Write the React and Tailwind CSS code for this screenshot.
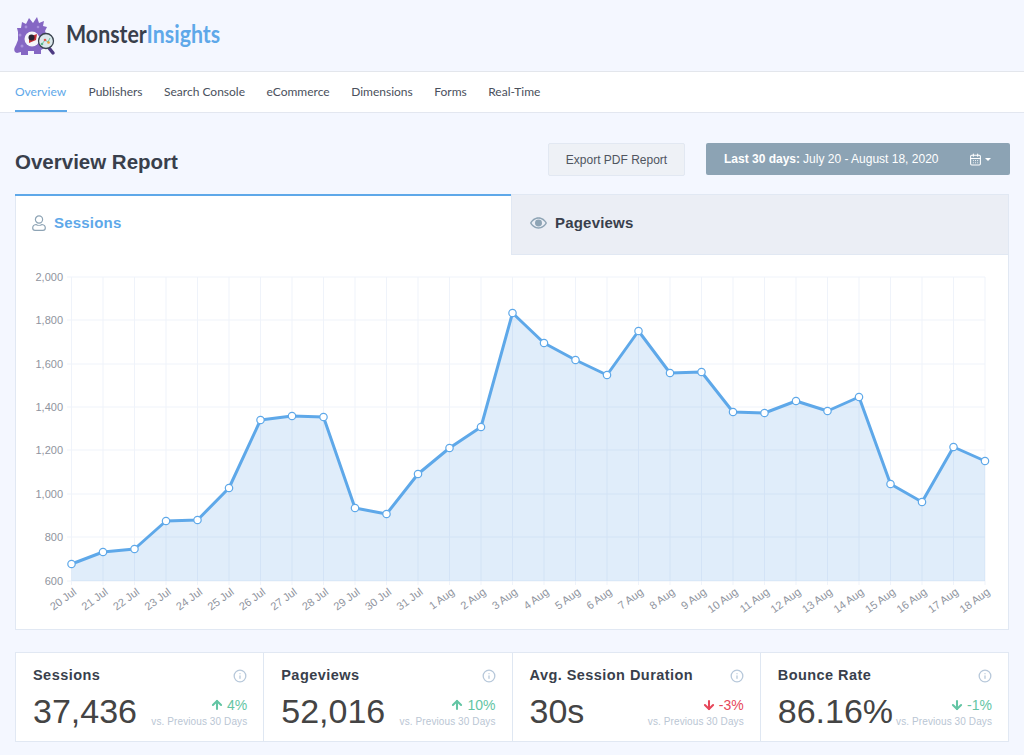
import React from "react";
import { ArrowUp, ArrowDown, Info, CalendarDays } from "lucide-react";

const sans = "font-['Liberation_Sans',Arial,sans-serif]";
const ys = [564, 552, 549, 521, 520, 488, 420, 416, 417, 508, 514, 474, 448, 427, 313, 343, 360, 375, 331, 373, 372, 412, 413, 401, 411, 397, 484, 502, 447, 461];
const labels = ["20 Jul","21 Jul","22 Jul","23 Jul","24 Jul","25 Jul","26 Jul","27 Jul","28 Jul","29 Jul","30 Jul","31 Jul","1 Aug","2 Aug","3 Aug","4 Aug","5 Aug","6 Aug","7 Aug","8 Aug","9 Aug","10 Aug","11 Aug","12 Aug","13 Aug","14 Aug","15 Aug","16 Aug","17 Aug","18 Aug"];
const yTicks = [["2,000",277],["1,800",320],["1,600",364],["1,400",407],["1,200",450],["1,000",494],["800",537],["600",581]];
const X = (i) => 71.5 + i * 31.5;

function Chart() {
  const line = ys.map((y, i) => `${X(i)},${y}`).join(" ");
  const area = `71.5,581 ${line} ${X(29)},581`;
  return (
    <svg viewBox="16 255 992 374" className="block w-[992px] h-[374px]">
      {yTicks.map(([t, y]) => (
        <g key={t}>
          <line x1="67" x2={X(29)} y1={y} y2={y} stroke="#eff3fa" strokeWidth="1" />
          <text x="63" y={y + 4} textAnchor="end" fontSize="11" fill="#8f949e" fontFamily="Liberation Sans">{t}</text>
        </g>
      ))}
      {labels.map((l, i) => (
        <g key={l}>
          <line x1={X(i)} x2={X(i)} y1="277" y2="585" stroke="#eff3fa" strokeWidth="1" />
          <text transform={`translate(${X(i) + 1} 587) rotate(-36)`} textAnchor="end" dominantBaseline="hanging" fontSize="11" fill="#8f949e" fontFamily="Liberation Sans">{l}</text>
        </g>
      ))}
      <polygon points={area} fill="#5a9fe6" fillOpacity="0.19" />
      <polyline points={line} fill="none" stroke="#5ea8e9" strokeWidth="3" strokeLinejoin="round" />
      {ys.map((y, i) => (
        <circle key={i} cx={X(i)} cy={y} r="3.7" fill="#fff" stroke="#5ea8e9" strokeWidth="1.2" />
      ))}
    </svg>
  );
}

function Logo() {
  return (
    <svg viewBox="0 0 42 40" className="w-[42px] h-[40px] shrink-0">
      <path fill="#8567c4" d="M3 37 C-1 36 0 32 2 29 L4 24 L4 16 L3 12 L7 12 L8 6 L12 8 L15 2 L19 7 L23 1 L25 7 L30 5 L29 10 L33 11 L31 15 L33 20 L34 30 L27 34 L27 38 L20 38 L20 35 L14 35 L14 39 L7 39 L7 36 Z" />
      <circle cx="6" cy="19" r="1.5" fill="#a890db" />
      <circle cx="12" cy="11" r="1.4" fill="#a890db" />
      <circle cx="24" cy="11" r="1.300" fill="#a890db" />
      <circle cx="8" cy="30" r="1.500" fill="#a890db" />
      <circle cx="18" cy="23" r="7.500" fill="#f6f6fa" />
      <path d="M15 21 L23 18 L22 24 L15 27 Z" fill="#c62f37" />
      <circle cx="17.500" cy="21.500" r="3" fill="#2a2433" />
      <path d="M35 32 L39 37" stroke="#4d3a82" strokeWidth="3.500" strokeLinecap="round" />
      <circle cx="32" cy="25" r="7.500" fill="#dbe8ec" stroke="#39424e" strokeWidth="1.300" />
      <path d="M28 28 L31 24 L34 26 L36 22" fill="none" stroke="#6fc3a5" strokeWidth="1" />
      <circle cx="28" cy="28" r="1.300" fill="#5fb88f" />
      <circle cx="31" cy="24" r="1.300" fill="#e2574c" />
      <circle cx="34.500" cy="26.500" r="1.300" fill="#e9a23b" />
    </svg>
  );
}

function Eye() {
  return (
    <svg viewBox="0 0 18 12" className="w-[17px] h-[12px] shrink-0">
      <path fill="#8ea4b5" d="M9 0C5 0 1.800 2.500 0 6c1.800 3.500 5 6 9 6s7.200-2.500 9-6c-1.800-3.500-5-6-9-6zm0 10.500C6 10.500 3.300 8.800 1.600 6 3.300 3.200 6 1.500 9 1.500s5.700 1.700 7.400 4.500C14.700 8.800 12 10.500 9 10.500z" />
      <circle cx="9" cy="6" r="3.700" fill="#8ea4b5" />
    </svg>
  );
}

function Person() {
  return (
    <svg viewBox="0 0 14 16" className="w-[14px] h-[16px] shrink-0" fill="none" stroke="#8ea4b5" strokeWidth="1.200">
      <circle cx="7" cy="4.500" r="3.600" />
      <path d="M4 9.500 C2 9.800 0.700 11 0.700 13 C0.700 14.500 1.700 15.300 3 15.300 L11 15.300 C12.300 15.300 13.300 14.500 13.300 13 C13.300 11 12 9.800 10 9.500 C8.500 10.500 5.500 10.500 4 9.500 Z" />
    </svg>
  );
}

function Stat({ title, value, delta, dir, good, last }) {
  const color = good ? "text-[#63c5a4]" : "text-[#e6475a]";
  const Arrow = dir === "up" ? ArrowUp : ArrowDown;
  return (
    <div className={`flex-1 min-w-0 h-full pl-[17px] pr-[16px] pt-[15px] ${last ? "" : "border-r border-[#dfe7f2]"}`}>
      <div className="flex items-center justify-between h-[16px]">
        <span className="text-[14.5px] font-bold text-[#393f4c] tracking-[0.45px] whitespace-nowrap">{title}</span>
        <Info className="w-[14px] h-[14px] text-[#b7c8da]" strokeWidth={2.2} />
      </div>
      <div className="flex items-end justify-between mt-[5px]">
        <span className="text-[34px] leading-[44px] text-[#444444] whitespace-nowrap">{value}</span>
        <div className="flex flex-col items-end mb-[4px]">
          <span className={`flex items-center gap-[3px] text-[14px] leading-[18px] ${color}`}>
            <Arrow className="w-[14px] h-[14px]" strokeWidth={3.5} />
            {delta}
          </span>
          <span className="text-[10px] leading-[15px] text-[#bac6d4] whitespace-nowrap tracking-[0.1px]">vs. Previous 30 Days</span>
        </div>
      </div>
    </div>
  );
}

export default function App() {
  const nav = ["Publishers", "Search Console", "eCommerce", "Dimensions", "Forms", "Real-Time"];
  return (
    <div className={`h-[755px] overflow-hidden bg-[#f4f7ff] ${sans}`}>
      <header className="h-[72px] border-b border-[#e3e6ec] flex items-center pl-[14px] gap-[10px]">
        <Logo />
        <span className="font-['Lato',sans-serif] font-bold text-[24px] leading-none mt-[-4px] origin-left scale-x-[0.89] whitespace-nowrap">
          <span className="text-[#393f4c]">Monster</span><span className="text-[#5ea8e9]">Insights</span>
        </span>
      </header>
      <nav className="h-[41px] bg-white border-b border-[#e3e7f0] flex pl-[15px] gap-[21.5px] font-['Lato',sans-serif] text-[12px] text-[#4a505c]">
        <span className="h-full flex items-center text-[#5ea8e9] border-b-2 border-[#5ea8e9] pt-[1px] w-[52px]">Overview</span>
        {nav.map((n) => (
          <span key={n} className="h-full flex items-center pb-[1px]">{n}</span>
        ))}
      </nav>
      <main className="px-[15px]">
        <div className="flex items-start justify-between h-[81px]">
          <h1 className="text-[20.5px] leading-[28px] pt-[35px] font-bold text-[#393f4c]">Overview Report</h1>
          <div className="flex items-start gap-[21px] pt-[30px] -mr-px">
            <button className="w-[137px] h-[33px] bg-[#eef1f6] border border-[#e2e8f2] rounded-[2px] text-[12px] text-[#4f5560]">Export PDF Report</button>
            <button className="w-[304px] h-[32px] bg-[#8ca3b4] rounded-[2px] text-[12px] text-white flex items-center pl-[18px] pr-[19px]">
              <span className="font-bold">Last 30 days:</span>
              <span className="ml-[3px]">July 20 - August 18, 2020</span>
              <CalendarDays className="w-[13px] h-[13px] ml-auto" strokeWidth={2} />
              <span className="ml-[3px] w-0 h-0 border-x-[3px] border-x-transparent border-t-[3px] border-t-white" />
            </button>
          </div>
        </div>
        <section className="w-[994px] bg-white border border-[#e1e8f3]">
          <div className="flex h-[60px]">
            <div className="w-[496px] -mt-px -ml-px border-t-2 border-[#5ea8e9] flex items-center pl-[17px] pb-[5px] gap-[8px] text-[#5ea8e9] font-bold text-[15px] tracking-[0.2px]">
              <Person />
              <span>Sessions</span>
            </div>
            <div className="flex-1 bg-[#ebeef5] border-l border-b border-[#e1e8f3] flex items-center pl-[18px] pb-[3px] gap-[8px] text-[#393f4c] font-bold text-[15px] tracking-[0.2px]">
              <Eye />
              <span>Pageviews</span>
            </div>
          </div>
          <Chart />
        </section>
        <section className="mt-[22px] w-[994px] h-[90px] bg-white border border-[#e1e8f3] flex">
          <Stat title="Sessions" value="37,436" delta="4%" dir="up" good />
          <Stat title="Pageviews" value="52,016" delta="10%" dir="up" good />
          <Stat title="Avg. Session Duration" value="30s" delta="-3%" dir="down" />
          <Stat title="Bounce Rate" value="86.16%" delta="-1%" dir="down" good last />
        </section>
      </main>
    </div>
  );
}
